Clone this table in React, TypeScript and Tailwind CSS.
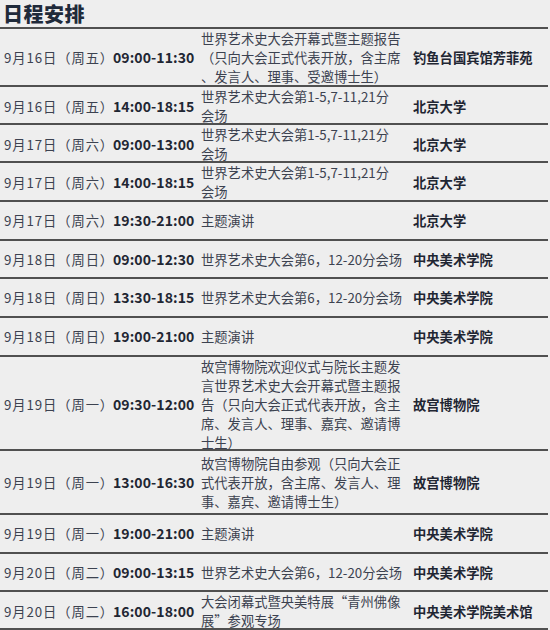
import React from "react";

type Row = {
  h: string;
  date: string;
  time: string;
  event: string[];
  place: string;
};

const rows: Row[] = [
  {
    h: "h-[58px]",
    date: "9月16日（周五）",
    time: "09:00-11:30",
    event: ["世界艺术史大会开幕式暨主题报告", "（只向大会正式代表开放，含主席", "、发言人、理事、受邀博士生）"],
    place: "钓鱼台国宾馆芳菲苑",
  },
  { h: "h-[38px]", date: "9月16日（周五）", time: "14:00-18:15", event: ["世界艺术史大会第1-5,7-11,21分", "会场"], place: "北京大学" },
  { h: "h-[38px]", date: "9月17日（周六）", time: "09:00-13:00", event: ["世界艺术史大会第1-5,7-11,21分", "会场"], place: "北京大学" },
  { h: "h-[39px]", date: "9月17日（周六）", time: "14:00-18:15", event: ["世界艺术史大会第1-5,7-11,21分", "会场"], place: "北京大学" },
  { h: "h-[39px]", date: "9月17日（周六）", time: "19:30-21:00", event: ["主题演讲"], place: "北京大学" },
  { h: "h-[38px]", date: "9月18日（周日）", time: "09:00-12:30", event: ["世界艺术史大会第6，12-20分会场"], place: "中央美术学院" },
  { h: "h-[39px]", date: "9月18日（周日）", time: "13:30-18:15", event: ["世界艺术史大会第6，12-20分会场"], place: "中央美术学院" },
  { h: "h-[39px]", date: "9月18日（周日）", time: "19:00-21:00", event: ["主题演讲"], place: "中央美术学院" },
  {
    h: "h-[94px]",
    date: "9月19日（周一）",
    time: "09:30-12:00",
    event: [
      "故宫博物院欢迎仪式与院长主题发",
      "言世界艺术史大会开幕式暨主题报",
      "告（只向大会正式代表开放，含主",
      "席、发言人、理事、嘉宾、邀请博",
      "士生）",
    ],
    place: "故宫博物院",
  },
  {
    h: "h-[64px]",
    date: "9月19日（周一）",
    time: "13:00-16:30",
    event: ["故宫博物院自由参观（只向大会正", "式代表开放，含主席、发言人、理", "事、嘉宾、邀请博士生）"],
    place: "故宫博物院",
  },
  { h: "h-[39px]", date: "9月19日（周一）", time: "19:00-21:00", event: ["主题演讲"], place: "中央美术学院" },
  { h: "h-[38px]", date: "9月20日（周二）", time: "09:00-13:15", event: ["世界艺术史大会第6，12-20分会场"], place: "中央美术学院" },
  { h: "h-[38px]", date: "9月20日（周二）", time: "16:00-18:00", event: ["大会闭幕式暨央美特展“青州佛像", "展”参观专场"], place: "中央美术学院美术馆" },
];

export default function App() {
  return (
    <div
      className="w-[550px] h-[630px] overflow-hidden bg-[#eeeeee] text-[#3c4250]"
      style={{ fontFamily: '"Noto Sans CJK SC", "Noto Sans", sans-serif' }}
    >
      <div className="h-[27px] flex items-center pl-[3px] text-[20px] font-black leading-none text-[#1f2a3a] tracking-[0.5px]">
        日程安排
      </div>
      <div className="w-[548px] border-b-2 border-[#505050]">
        {rows.map((r, i) => (
          <div
            key={i}
            className={`${r.h} border-t-2 border-[#505050] grid grid-cols-[113px_88px_212px_135px] items-center text-[13.3px] leading-[19px]`}
          >
            <div className="pl-[4px] whitespace-nowrap tracking-[0.9px]">{r.date}</div>
            <div className="font-bold text-[#1f2633] text-[14px] tracking-[0.1px] whitespace-nowrap">{r.time}</div>
            <div className="whitespace-nowrap">
              {r.event.map((l, j) => (
                <div key={j}>{l}</div>
              ))}
            </div>
            <div className="font-bold text-[#1f2633] whitespace-nowrap">{r.place}</div>
          </div>
        ))}
      </div>
    </div>
  );
}
